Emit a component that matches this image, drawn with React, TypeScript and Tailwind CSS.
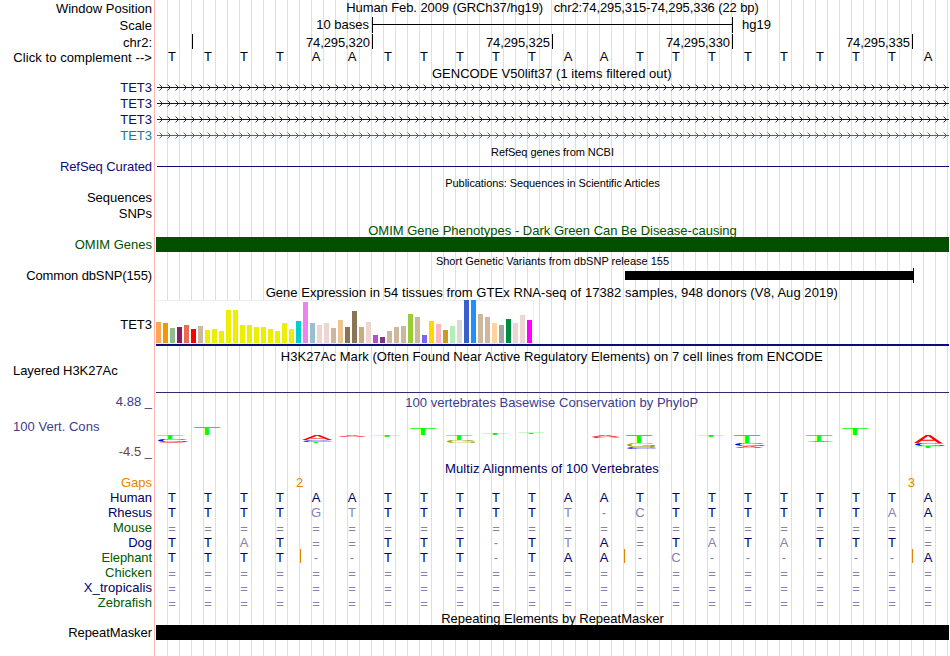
import React from "react";

const LABELS: { text: string; cls: string }[] = [
  { text: "Window Position", cls: "mt-px" },
  { text: "Scale", cls: "mt-0.5" },
  { text: "chr2:", cls: "mt-0.5" },
  { text: "Click to complement -->", cls: "tracking-[0.08px]" },
  { text: "TET3", cls: "mt-[15px] text-[#0c0c78]" },
  { text: "TET3", cls: "mt-px text-[#0c0c78]" },
  { text: "TET3", cls: "mt-px text-[#0c0c78]" },
  { text: "TET3", cls: "mt-px text-[#0c78b4]" },
  { text: "RefSeq Curated", cls: "mt-4 tracking-[-0.08px] text-[#0c0c78]" },
  { text: "Sequences", cls: "mt-4" },
  { text: "SNPs", cls: "mt-px" },
  { text: "OMIM Genes", cls: "mt-4 text-[#005000]" },
  { text: "Common dbSNP(155)", cls: "mt-4 tracking-[-0.12px]" },
  { text: "TET3", cls: "mt-[34px]" },
  { text: "Layered H3K27Ac", cls: "mt-[31px] self-start pl-[13px] tracking-[-0.06px]" },
  { text: "4.88 _", cls: "mt-4 text-[#3c3c8c]" },
  { text: "100 Vert. Cons", cls: "mt-2.5 self-start pl-[13px] tracking-[0.03px] text-[#3c3c8c]" },
  { text: "-4.5 _", cls: "mt-2.5 text-[#783c3c]" },
  { text: "Gaps", cls: "mt-4 text-[#e68200]" },
  { text: "Human", cls: "text-[#000064]" },
  { text: "Rhesus", cls: "text-[#000064]" },
  { text: "Mouse", cls: "text-[#005a00]" },
  { text: "Dog", cls: "text-[#000064]" },
  { text: "Elephant", cls: "tracking-[-0.1px] text-[#005a00]" },
  { text: "Chicken", cls: "text-[#005a00]" },
  { text: "X_tropicalis", cls: "tracking-[0.08px] text-[#000064]" },
  { text: "Zebrafish", cls: "text-[#005a00]" },
  { text: "RepeatMasker", cls: "mt-[15px] tracking-[-0.06px]" },
];

const HUMAN = "TTTTAATTTTTAATTTTTTTTA";

const ALIGNMENTS = [
  { name: "Human", seq: HUMAN },
  { name: "Rhesus", seq: "TTTTGTTTTTTT-CTTTTTTAA" },
  { name: "Mouse", seq: "======================" },
  { name: "Dog", seq: "TTAT==TTT-TTA=TATATTT=" },
  { name: "Elephant", seq: "TTTT--TTT-TAA-C------A" },
  { name: "Chicken", seq: "======================" },
  { name: "X_tropicalis", seq: "======================" },
  { name: "Zebrafish", seq: "======================" },
];

const TISSUES: [number, string][] = [
  [21, "#ffa54f"], [20, "#ee9a00"], [15, "#8fbc8f"], [16, "#8b1c62"], [18, "#ee6a50"], [14, "#ff0000"],
  [17, "#cdb79e"], [13, "#eeee00"], [14, "#eeee00"], [12, "#eeee00"], [33, "#eeee00"], [33, "#eeee00"],
  [18, "#eeee00"], [18, "#eeee00"], [16, "#eeee00"], [16, "#eeee00"], [14, "#eeee00"], [12, "#eeee00"],
  [20, "#eeee00"], [14, "#eeee00"], [22, "#00cdcd"], [41, "#ee82ee"], [20, "#9ac0cd"], [18, "#eed5d2"],
  [20, "#eed5d2"], [15, "#cdb79e"], [23, "#eec591"], [16, "#8b7355"], [32, "#8b7355"], [16, "#cdaa7d"],
  [21, "#eed5d2"], [8, "#b452cd"], [6, "#7a378b"], [12, "#cdb79e"], [16, "#cdb79e"], [17, "#cdb79e"],
  [29, "#9acd32"], [26, "#cdb79e"], [8, "#7a67ee"], [22, "#ffd700"], [19, "#ffb6c1"], [13, "#cd9b1d"],
  [17, "#b4eeb4"], [23, "#d9d9d9"], [43, "#3a5fcd"], [43, "#1e90ff"], [29, "#cdb79e"], [26, "#cdb79e"],
  [20, "#ffd39b"], [18, "#a6a6a6"], [24, "#008b45"], [20, "#eed5d2"], [28, "#eed5d2"], [23, "#ff00ff"],
];

/* Ink extents of each base letter at a 100px font size: [left bearing, ink width]. */
const INK: Record<string, [number, number]> = {
  T: [2.1, 56.9],
  A: [0.2, 66.3],
  C: [5, 63.5],
  G: [5, 66],
};
const BASE_COLOR: Record<string, string> = { T: "#00ff00", A: "#ff0000", C: "#0000ff", G: "#a0a000" };

/* letter, x, width, top, height */
const LOGO: [string, number, number, number, number][] = [
  ["T", 1, 26, 8, 4], ["C", 2, 30, 12, 3], ["A", 2, 28, 15, 1],
  ["T", 38, 26, 0, 8],
  ["A", 146, 30, 8, 5], ["C", 147, 30, 13, 1.6], ["T", 147, 26, 14.6, 1.2],
  ["A", 182, 28, 8, 1.7],
  ["T", 218, 26, 8, 2],
  ["T", 254, 26, 1, 7],
  ["T", 290, 26, 8, 5], ["G", 291, 28, 13, 3],
  ["T", 326, 26, 6, 2],
  ["T", 362, 26, 6, 1.2],
  ["A", 435, 28, 8, 2], ["C", 436, 29, 10, 1],
  ["T", 470, 26, 8, 8], ["G", 471, 28, 16, 4], ["C", 471, 30, 20, 2],
  ["T", 542, 26, 8, 2],
  ["T", 578, 26, 8, 8], ["C", 579, 30, 16, 3], ["A", 579, 28, 19, 2],
  ["T", 650, 26, 8, 6], ["A", 651, 27, 14, 1],
  ["T", 686, 26, 1, 7],
  ["A", 758, 28, 8, 8], ["C", 759, 30, 16, 3], ["T", 759, 26, 19, 2],
];

function Title({ children, cls = "" }: { children: React.ReactNode; cls?: string }) {
  return <div className={`text-center whitespace-pre ${cls}`}>{children}</div>;
}

function GeneLine({ color, cls }: { color: string; cls: string }) {
  const marks = Array.from({ length: 99 }, (_, i) => `M${3.5 + i * 8} 0.5l3 3l-3 3`).join("");
  return (
    <svg width="793" height="7" className={`block ${cls}`} fill="none" stroke={color}>
      <path d="M1 3.5H793" />
      <path d={marks} strokeWidth="0.9" />
    </svg>
  );
}

function BaseRow({ seq, children }: { seq: string; children?: React.ReactNode }) {
  return (
    <div className="relative h-[15px]">
      <div className="-ml-0.5 grid w-[792px] grid-cols-[repeat(22,36px)] text-center">
        {seq.split("").map((c, i) => (
          <span
            key={i}
            className={c === HUMAN[i] ? "" : c === "=" ? "translate-y-px text-[#8282b4]" : "text-[#8282b4]"}
          >
            {c}
          </span>
        ))}
      </div>
      {children}
    </div>
  );
}

export default function App() {
  return (
    <div className="flex h-[656px] w-[950px] overflow-hidden bg-white font-['Liberation_Sans',Arial,sans-serif] text-[13px] leading-[15px] text-black">
      <div className="flex w-[152px] shrink-0 flex-col items-end whitespace-pre">
        {LABELS.map((l, i) => (
          <div key={i} className={`h-[15px] ${l.cls}`}>
            {l.text}
          </div>
        ))}
      </div>
      <div className="ml-0.5 mr-px w-px shrink-0 bg-[#ffb4b4]" />
      <div className="w-[793px] shrink-0 bg-[repeating-linear-gradient(90deg,transparent_0px,transparent_11px,#dcdcfa_11px,#dcdcfa_12px)]">
        <Title cls="tracking-[-0.09px]">{"Human Feb. 2009 (GRCh37/hg19)   chr2:74,295,315-74,295,336 (22 bp)"}</Title>

        <div className="mt-0.5 flex h-4">
          <div className="w-[216px] pr-[3px] text-right">10 bases</div>
          <div className="w-[361px] border-x border-black pt-[7px]">
            <div className="h-px bg-black" />
          </div>
          <div className="pl-[9px]">hg19</div>
        </div>
        <div className="mt-px flex h-[15px]">
          <div className="w-[37px] border-r border-black" />
          {["74,295,320", "74,295,325", "74,295,330", "74,295,335"].map((p) => (
            <div key={p} className="w-[180px] border-r border-black pt-px pr-0.5 text-right tracking-[-0.1px]">
              {p}
            </div>
          ))}
        </div>
        <BaseRow seq={HUMAN} />

        <Title cls="mt-0.5 pr-[1.5px] tracking-[0.03px]">GENCODE V50lift37 (1 items filtered out)</Title>
        <GeneLine color="#0c0c78" cls="mt-[3px]" />
        <GeneLine color="#0c0c78" cls="mt-[9px]" />
        <GeneLine color="#0c0c78" cls="mt-[9px]" />
        <GeneLine color="#0c78b4" cls="mt-[9px]" />

        <Title cls="mt-1.5 text-[11px] tracking-[-0.06px]">RefSeq genes from NCBI</Title>
        <div className="mt-1.5 ml-px h-px bg-[#0c0c78]" />
        <Title cls="mt-[9px] text-[11px] tracking-[-0.07px]">Publications: Sequences in Scientific Articles</Title>

        <Title cls="mt-8 h-3.5 text-[#005000]">OMIM Gene Phenotypes - Dark Green Can Be Disease-causing</Title>
        <div className="h-[15px] bg-[#005000]" />

        <Title cls="mt-0.5 h-3.5 text-[11px]">Short Genetic Variants from dbSNP release 155</Title>
        <div className="ml-[469px] flex h-[15px] items-center">
          <div className="h-[9px] w-72 bg-black" />
          <div className="h-[15px] w-px bg-black" />
        </div>

        <Title cls="mt-0.5 pr-[1.5px] tracking-[0.055px]">
          Gene Expression in 54 tissues from GTEx RNA-seq of 17382 samples, 948 donors (V8, Aug 2019)
        </Title>
        <div className="flex h-11 w-[378px] items-end gap-0.5 border-y border-r border-[#eeeeee] bg-white">
          {TISSUES.map(([h, c], i) => (
            <div key={i} className="w-[5px] shrink-0" style={{ height: h, backgroundColor: c }} />
          ))}
        </div>
        <div className="h-0.5 bg-[#0c0c78]" />

        <Title cls="mt-[3px] pr-[1.5px] tracking-[0.05px]">
          H3K27Ac Mark (Often Found Near Active Regulatory Elements) on 7 cell lines from ENCODE
        </Title>
        <div className="mt-7 h-px bg-[#32286e]" />

        <Title cls="mt-0.5 pr-[1.5px] tracking-[0.02px] text-[#3c3c8c]">
          100 vertebrates Basewise Conservation by PhyloP
        </Title>
        <svg
          width="793"
          height="34"
          className="mt-[17px] block overflow-visible"
          fontFamily="Liberation Sans, Arial, sans-serif"
          fontSize="100"
          textRendering="geometricPrecision"
        >
          {LOGO.map(([ch, x, w, y, h], i) => (
            <text
              key={i}
              fill={BASE_COLOR[ch]}
              transform={`translate(${x} ${y + h}) scale(${w / INK[ch][1]} ${h / 68.8}) translate(${-INK[ch][0]} 0)`}
            >
              {ch}
            </text>
          ))}
        </svg>

        <Title cls="h-3.5 pr-px tracking-[0.08px] text-[#000064]">Multiz Alignments of 100 Vertebrates</Title>
        <div className="flex h-[15px] justify-between pr-[34px] pl-[140px] text-[#e68200]">
          <span>2</span>
          <span>3</span>
        </div>
        <div className="text-[#000064]">
          {ALIGNMENTS.map((a) => (
            <BaseRow key={a.name} seq={a.seq}>
              {a.name === "Elephant" && (
                <>
                  <i className="absolute -top-px left-36 h-3.5 w-px bg-[#e68200]" />
                  <i className="absolute -top-px left-[468px] h-3.5 w-px bg-[#e68200]" />
                  <i className="absolute -top-px left-[756px] h-3.5 w-px bg-[#e68200]" />
                </>
              )}
            </BaseRow>
          ))}
        </div>

        <Title cls="mt-px h-3.5">Repeating Elements by RepeatMasker</Title>
        <div className="h-[15px] bg-black" />
      </div>
    </div>
  );
}
